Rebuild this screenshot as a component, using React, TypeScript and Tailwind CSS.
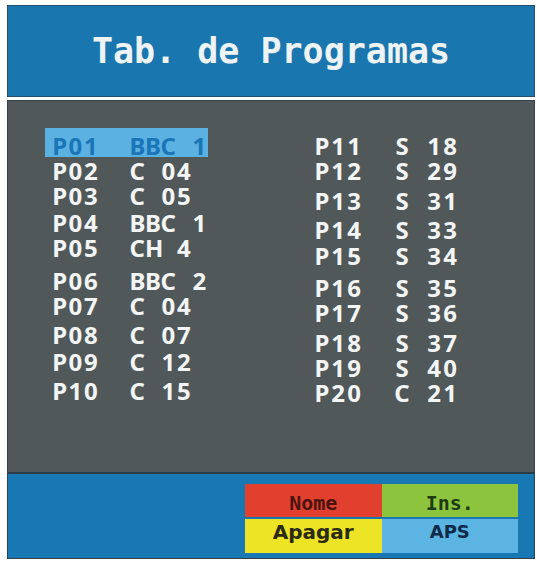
import React from 'react'

interface Channel {
  code: string
  name: string
  gap: string
  active?: boolean
}

const leftChannels: Channel[] = [
  { code: 'P01', name: 'BBC 1', gap: '', active: true },
  { code: 'P02', name: 'C 04', gap: 'mt-[1px]' },
  { code: 'P03', name: 'C 05', gap: '' },
  { code: 'P04', name: 'BBC 1', gap: 'mt-[2px]' },
  { code: 'P05', name: 'CH 4', gap: '' },
  { code: 'P06', name: 'BBC 2', gap: 'mt-[8px]' },
  { code: 'P07', name: 'C 04', gap: '' },
  { code: 'P08', name: 'C 07', gap: 'mt-[4px]' },
  { code: 'P09', name: 'C 12', gap: 'mt-[2px]' },
  { code: 'P10', name: 'C 15', gap: 'mt-[4px]' },
]

const rightChannels: Channel[] = [
  { code: 'P11', name: 'S 18', gap: '' },
  { code: 'P12', name: 'S 29', gap: '' },
  { code: 'P13', name: 'S 31', gap: 'mt-[5px]' },
  { code: 'P14', name: 'S 33', gap: 'mt-[4px]' },
  { code: 'P15', name: 'S 34', gap: 'mt-[1px]' },
  { code: 'P16', name: 'S 35', gap: 'mt-[7px]' },
  { code: 'P17', name: 'S 36', gap: '' },
  { code: 'P18', name: 'S 37', gap: 'mt-[5px]' },
  { code: 'P19', name: 'S 40', gap: '' },
  { code: 'P20', name: 'C 21', gap: '' },
]

// OSD text sits on a fixed character grid, one cell per glyph
const GridText = ({ text, cell }: { text: string; cell: string }): React.ReactElement => (
  <>
    {text.split('').map((ch, i) => (
      <span key={i} className={`${cell} shrink-0 text-center`}>
        {ch === ' ' ? '\u00a0' : ch}
      </span>
    ))}
  </>
)

const ChannelRow = ({ channel, cell }: { channel: Channel; cell: string }): React.ReactElement => {
  const text = `${channel.code}  ${channel.name}`
  if (channel.active) {
    return (
      <div className="flex items-start h-[29px] pt-[5px] pl-[7px] pr-[1px] bg-[#5cb1e3] text-[#1a76b6]">
        <div className="flex h-[25px] leading-[25px]">
          <GridText text={text} cell={cell} />
        </div>
      </div>
    )
  }
  return (
    <div className={`flex h-[25px] leading-[25px] pl-[7px] text-[#f3f5f5] ${channel.gap}`}>
      <GridText text={text} cell={cell} />
    </div>
  )
}

const App = (): React.ReactElement => {
  return (
    <div className="w-[537px] h-[562px] bg-white pl-[7px] pt-[5px]">
      <div className="w-[528px] h-[92px] border border-[#24506c] bg-[#1a76ae] flex items-center justify-center">
        <h1 className="text-[35px] leading-[40px] font-bold text-[#eef3f6] whitespace-pre font-['DejaVu_Sans_Mono',monospace]">
          Tab. de Programas
        </h1>
      </div>

      <div className="w-[528px] mt-[3px] border border-[#33424a]">
        <div className="h-[371px] bg-[#50585a] flex text-[24px] font-bold font-['Noto_Sans',sans-serif]">
          <div className="ml-[37px] pt-[27px] w-[163px] flex flex-col">
            {leftChannels.map((c) => (
              <ChannelRow key={c.code} channel={c} cell="w-[15.5px]" />
            ))}
          </div>
          <div className="ml-[99px] pt-[32px] flex flex-col">
            {rightChannels.map((c) => (
              <ChannelRow key={c.code} channel={c} cell="w-[16px]" />
            ))}
          </div>
        </div>

        <div className="h-[86px] border-t-2 border-[#2c3d47] bg-[#1878b3] pt-[10px] pl-[237px]">
          <div className="grid grid-cols-2 w-[273px] gap-y-[2px]">
            <div className="h-[33px] bg-[#e1402f] flex items-center justify-center pt-[5px] text-[20px] leading-none font-bold text-[#4a1410] font-['DejaVu_Sans_Mono',monospace]">
              Nome
            </div>
            <div className="h-[33px] bg-[#8dc43d] flex items-center justify-center pt-[5px] text-[20px] leading-none font-bold text-[#1d3c14] font-['DejaVu_Sans_Mono',monospace]">
              Ins.
            </div>
            <div className="h-[34px] bg-[#ede426] flex items-center justify-center pb-[8px] text-[20px] leading-none font-bold text-[#2b2a12] font-['DejaVu_Sans',sans-serif]">
              Apagar
            </div>
            <div className="h-[34px] bg-[#5cb4e2] flex items-center justify-center pb-[8px] text-[18px] leading-none font-bold text-[#0f2a48] font-['DejaVu_Sans',sans-serif]">
              APS
            </div>
          </div>
        </div>
      </div>
    </div>
  )
}

export default App
